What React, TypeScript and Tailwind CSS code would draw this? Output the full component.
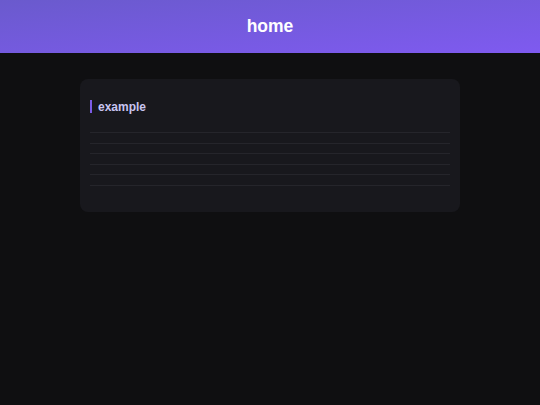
import React from 'react';

const rows = ['h-[11px]', 'h-[10px]', 'h-[11px]', 'h-[10px]', 'h-[11px]'];

const App: React.FC = () => {
  return (
    <div className="min-h-[405px] w-full bg-[#0f0f11] font-['Liberation_Sans',Arial,sans-serif]">
      <header className="h-[53px] flex items-center justify-center bg-linear-to-br from-[#6a5acd] to-[#7f5af0]">
        <h1 className="text-[17.5px] font-bold text-white leading-none">home</h1>
      </header>

      <main className="px-[80px] pt-[26px]">
        <section className="bg-[#18181d] rounded-[8px] px-[10px] pt-[21px] pb-[26px]">
          <h2 className="border-l-2 border-[#7c5ce6] pl-[6px] h-[13px] leading-[15px] text-[12px] font-bold text-[#c8c4f0]">
            example
          </h2>

          <div className="mt-[19px] flex flex-col">
            <div className="h-px bg-[#25252b]" />
            {rows.map((h, i) => (
              <div key={i} className={`${h} border-b border-[#25252b] box-border`} />
            ))}
          </div>
        </section>
      </main>
    </div>
  );
};

export default App;
